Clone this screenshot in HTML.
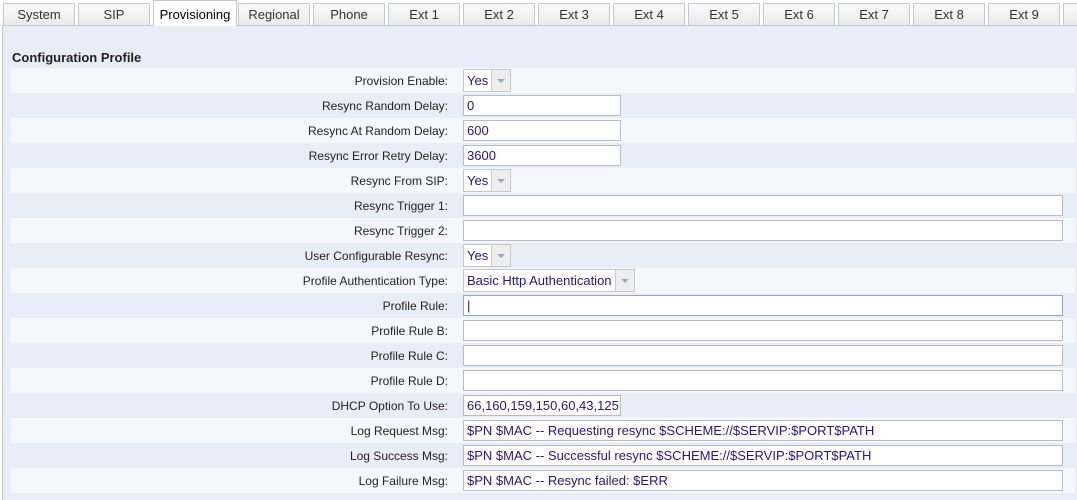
<!DOCTYPE html>
<html><head><style>
body{margin:0;width:1077px;height:499px;overflow:hidden;background:#fff;font-family:"Liberation Sans",Arial,sans-serif;font-size:12px;position:relative}
.tab{position:absolute;top:3px;height:22px;width:72px;border:1px solid #c4c8cf;border-bottom:none;background:linear-gradient(#fafafa,#eaeaea);color:#333;text-align:center;line-height:22px;font-size:13px;box-sizing:border-box}
.tab.act{top:0;height:26px;background:#fff;color:#000;line-height:28px;z-index:2}
.panel{position:absolute;left:2px;top:25px;width:1080px;height:474px;background:#e8eef7;border-left:1px solid #c4c8cf;border-top:1px solid #c4c8cf}
h3{position:absolute;left:12px;top:50px;margin:0;font-size:13px;font-weight:bold;color:#222}
.row{position:absolute;left:11px;width:1064px;height:25px}
.row.l{background:#f4f8fd}
.lab{position:absolute;right:627px;top:6px;color:#222;white-space:nowrap}
.in{position:absolute;left:452px;top:2px;height:21px;box-sizing:border-box;border:1px solid #b8bcc6;background:#fff;color:#2a1583;padding-left:3px;line-height:19px;font-size:13px;white-space:nowrap}
.sel{position:absolute;left:452px;top:1px;height:23px;box-sizing:border-box;border:1px solid #c4c8cf;background:#fff;color:#2a1583;padding-left:3px;line-height:21px;font-size:13px}
.sel i{position:absolute;right:0;top:0;width:18px;height:21px;background:#eeeeee;border-left:1px solid #ccc}
.sel i:after{content:"";position:absolute;left:5px;top:9px;border:4px solid transparent;border-top:4px solid #a0a8b8}
</style></head><body>
<div class="panel"></div>
<div class="tab" style="left:3px">System</div>
<div class="tab" style="left:78px">SIP</div>
<div class="tab act" style="left:153px;width:84px">Provisioning</div>
<div class="tab" style="left:238px">Regional</div>
<div class="tab" style="left:313px">Phone</div>
<div class="tab" style="left:388px">Ext 1</div>
<div class="tab" style="left:463px">Ext 2</div>
<div class="tab" style="left:538px">Ext 3</div>
<div class="tab" style="left:613px">Ext 4</div>
<div class="tab" style="left:688px">Ext 5</div>
<div class="tab" style="left:763px">Ext 6</div>
<div class="tab" style="left:838px">Ext 7</div>
<div class="tab" style="left:913px">Ext 8</div>
<div class="tab" style="left:988px">Ext 9</div>
<div class="tab" style="left:1063px"></div>
<h3>Configuration Profile</h3>

<div class="row l" style="top:68px"><span class="lab">Provision Enable:</span><div class="sel" style="width:48px">Yes<i></i></div></div>
<div class="row" style="top:93px"><span class="lab">Resync Random Delay:</span><div class="in" style="width:158px">0</div></div>
<div class="row l" style="top:118px"><span class="lab">Resync At Random Delay:</span><div class="in" style="width:158px">600</div></div>
<div class="row" style="top:143px"><span class="lab">Resync Error Retry Delay:</span><div class="in" style="width:158px">3600</div></div>
<div class="row l" style="top:168px"><span class="lab">Resync From SIP:</span><div class="sel" style="width:48px">Yes<i></i></div></div>
<div class="row" style="top:193px"><span class="lab">Resync Trigger 1:</span><div class="in" style="width:600px"></div></div>
<div class="row l" style="top:218px"><span class="lab">Resync Trigger 2:</span><div class="in" style="width:600px"></div></div>
<div class="row" style="top:243px"><span class="lab">User Configurable Resync:</span><div class="sel" style="width:48px">Yes<i></i></div></div>
<div class="row l" style="top:268px"><span class="lab">Profile Authentication Type:</span><div class="sel" style="width:172px">Basic Http Authentication<i></i></div></div>
<div class="row" style="top:293px"><span class="lab">Profile Rule:</span><div class="in" style="width:600px;border-color:#9aa4bc">|</div></div>
<div class="row l" style="top:318px"><span class="lab">Profile Rule B:</span><div class="in" style="width:600px"></div></div>
<div class="row" style="top:343px"><span class="lab">Profile Rule C:</span><div class="in" style="width:600px"></div></div>
<div class="row l" style="top:368px"><span class="lab">Profile Rule D:</span><div class="in" style="width:600px"></div></div>
<div class="row" style="top:393px"><span class="lab">DHCP Option To Use:</span><div class="in" style="width:158px">66,160,159,150,60,43,125</div></div>
<div class="row l" style="top:418px"><span class="lab">Log Request Msg:</span><div class="in" style="width:600px">$PN $MAC -- Requesting resync $SCHEME://$SERVIP:$PORT$PATH</div></div>
<div class="row" style="top:443px"><span class="lab">Log Success Msg:</span><div class="in" style="width:600px">$PN $MAC -- Successful resync $SCHEME://$SERVIP:$PORT$PATH</div></div>
<div class="row l" style="top:468px"><span class="lab">Log Failure Msg:</span><div class="in" style="width:600px">$PN $MAC -- Resync failed: $ERR</div></div>
</body></html>
